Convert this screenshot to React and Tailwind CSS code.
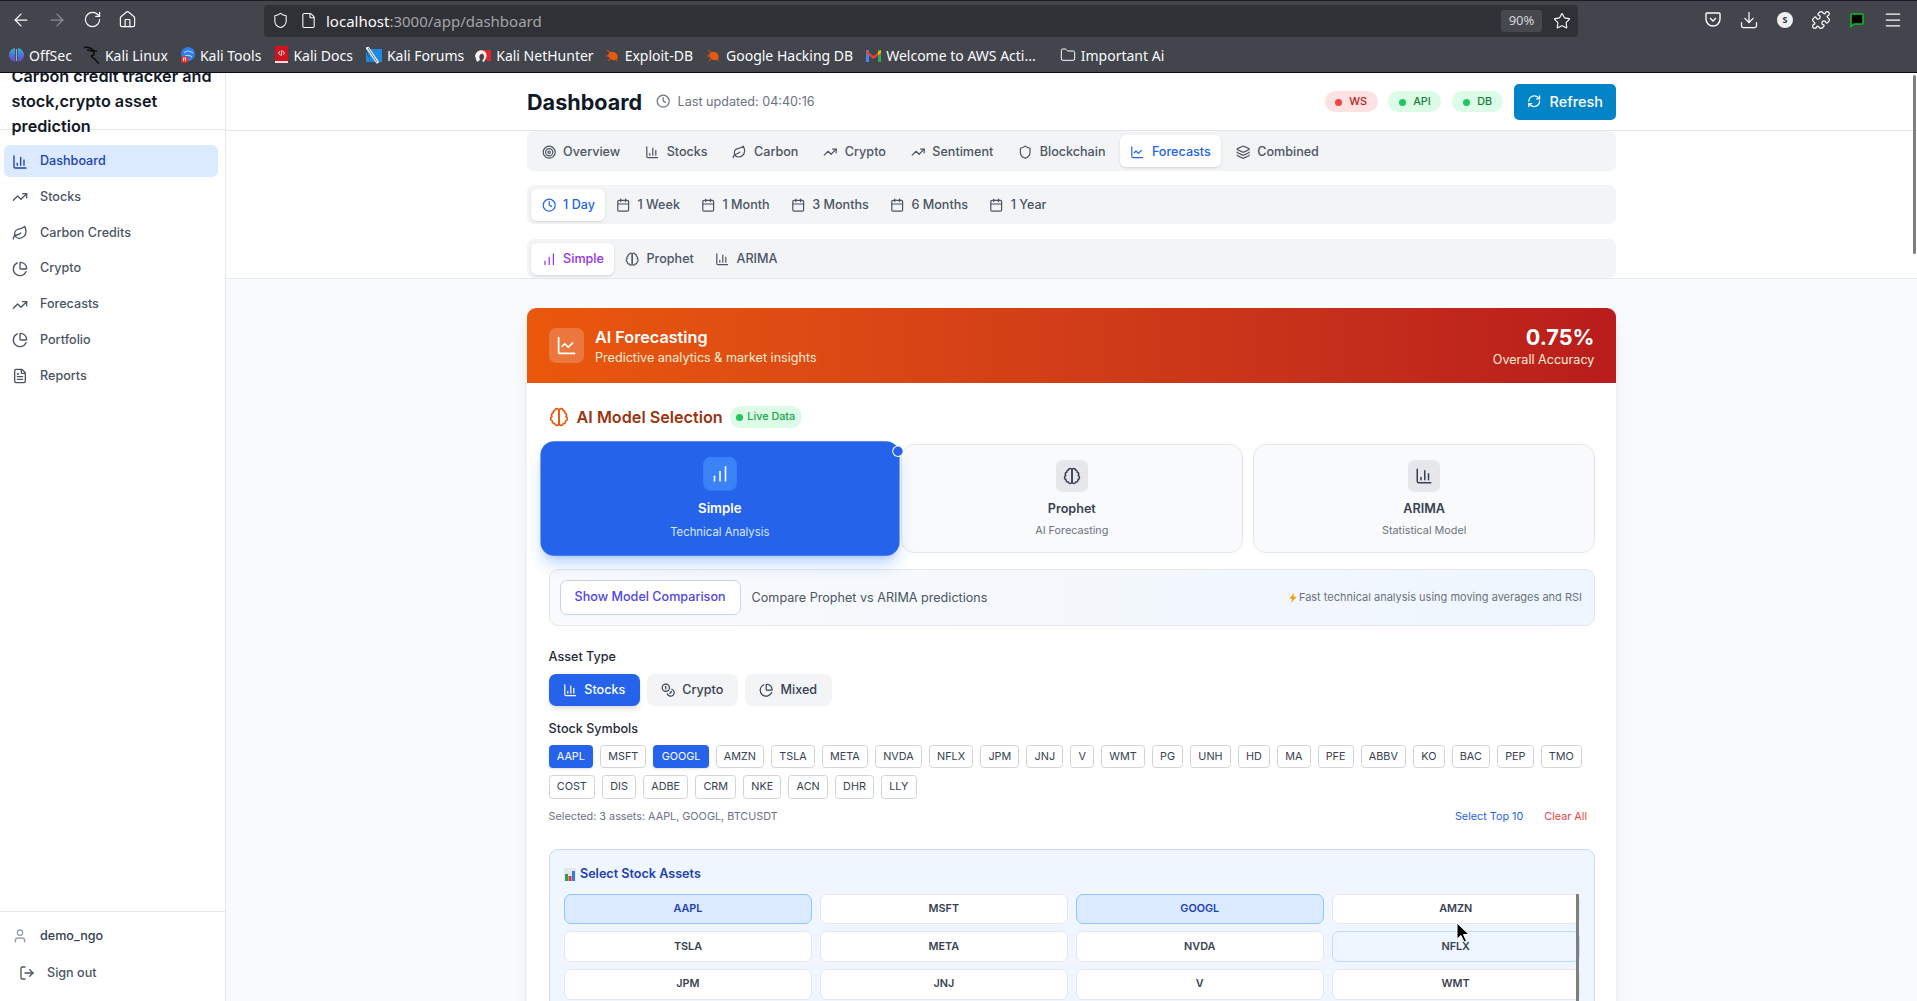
import {
  ArrowLeft, ArrowRight, RotateCw, Home, Shield, File, Star, Download, Menu, Folder, Puzzle,
  ChartColumn, ChartLine, TrendingUp, Leaf, PieChart, FileText, User, LogOut, Target, Layers,
  Clock, Calendar, RefreshCw, ChartNoAxesColumnIncreasing, Coins,
} from 'lucide-react';

// the two-lobed brain, lucide's current one has different strokes
function BrainIcon({ size = 18, color = 'currentColor' }) {
  return (
    <svg width={size} height={size} viewBox="0 0 24 24" fill="none" stroke={color} strokeWidth="2" strokeLinecap="round" strokeLinejoin="round">
      <path d="M9.500 2A2.500 2.500 0 0 1 12 4.500v15a2.500 2.500 0 0 1-4.960.44 2.500 2.500 0 0 1-2.960-3.080 3 3 0 0 1-.340-5.580 2.500 2.500 0 0 1 1.320-4.240 2.500 2.500 0 0 1 1.980-3A2.500 2.500 0 0 1 9.500 2Z" />
      <path d="M14.500 2A2.500 2.500 0 0 0 12 4.500v15a2.500 2.500 0 0 0 4.960.44 2.500 2.500 0 0 0 2.960-3.080 3 3 0 0 0 .340-5.580 2.500 2.500 0 0 0-1.320-4.240 2.500 2.500 0 0 0-1.980-3A2.500 2.500 0 0 0 14.500 2Z" />
    </svg>
  );
}

const NAV = [
  { label: 'Dashboard', icon: ChartColumn, active: true },
  { label: 'Stocks', icon: TrendingUp },
  { label: 'Carbon Credits', icon: Leaf },
  { label: 'Crypto', icon: PieChart },
  { label: 'Forecasts', icon: TrendingUp },
  { label: 'Portfolio', icon: PieChart },
  { label: 'Reports', icon: FileText },
];

const TABS = [
  { label: 'Overview', icon: Target },
  { label: 'Stocks', icon: ChartColumn },
  { label: 'Carbon', icon: Leaf },
  { label: 'Crypto', icon: TrendingUp },
  { label: 'Sentiment', icon: TrendingUp },
  { label: 'Blockchain', icon: Shield },
  { label: 'Forecasts', icon: ChartLine, active: true },
  { label: 'Combined', icon: Layers },
];

const RANGES = ['1 Week', '1 Month', '3 Months', '6 Months', '1 Year'];

const SYMBOLS = [
  'AAPL', 'MSFT', 'GOOGL', 'AMZN', 'TSLA', 'META', 'NVDA', 'NFLX', 'JPM', 'JNJ', 'V', 'WMT', 'PG', 'UNH', 'HD',
  'MA', 'PFE', 'ABBV', 'KO', 'BAC', 'PEP', 'TMO', 'COST', 'DIS', 'ADBE', 'CRM', 'NKE', 'ACN', 'DHR', 'LLY',
];
const SELECTED = ['AAPL', 'GOOGL'];

// tiny bookmark favicons
const Fav = {
  offsec: (
    <svg width="15" height="16" viewBox="0 0 15 16">
      <defs>
        <linearGradient id="off" x1="0" y1="0" x2="0" y2="1">
          <stop offset="0" stopColor="#35b0d8" />
          <stop offset="1" stopColor="#6a3fd0" />
        </linearGradient>
      </defs>
      <path d="M6 1C2 2 0 5 0 8s2 6 6 7z" fill="url(#off)" />
      <path d="M9 1c4 1 6 4 6 7s-2 6-6 7z" fill="url(#off)" />
      <rect x="6.900" y="2" width="1.200" height="12" fill="#7fb6e8" />
    </svg>
  ),
  kali: (
    <svg width="16" height="18" viewBox="0 0 16 18" fill="none" stroke="#0b0b0b" strokeWidth="1.4">
      <path d="M0 1.500c3-.5 6 0 8 1.500s3 3 5 2M3 4c3 0 6 1 7 3s-1 3-3 2.500M7 9.500c1 3 4 3 5 5s1 2 3 3" />
    </svg>
  ),
  tools: (
    <svg width="15" height="18" viewBox="0 0 15 18">
      <circle cx="8" cy="8" r="7" fill="#2f80ed" />
      <path d="M4 7c3-3 6-2 9 0M5 10c2-1 5-1 7 1" stroke="#cfe4ff" strokeWidth="1" fill="none" />
      <rect x="1" y="10" width="7" height="7" rx="3" fill="#e5322d" />
      <path d="M3 12h3M3.500 12v3M5.500 12v3" stroke="#fff" strokeWidth=".8" />
    </svg>
  ),
  docs: (
    <svg width="13" height="18" viewBox="0 0 13 18">
      <rect width="13" height="15" fill="#d3121d" />
      <rect y="15" width="13" height="2" fill="#f0d9d9" />
      <path d="M5 5 3.500 7 5 9M8 5l1.500 2L8 9M7 4 6 10" stroke="#fff" strokeWidth=".9" fill="none" />
    </svg>
  ),
  forums: (
    <svg width="16" height="17" viewBox="0 0 16 17">
      <path d="M0 2h16v13H5z" fill="#1e88e5" />
      <path d="M0 5v10h5z" fill="#1e88e5" />
      <path d="M1 0l11 16" stroke="#fff" strokeWidth="3" />
      <path d="M2 1l9 14" stroke="#3a3d44" strokeWidth=".8" />
    </svg>
  ),
  hunter: (
    <svg width="17" height="17" viewBox="0 0 17 17">
      <path d="M5 3h12v11h-4z" fill="#e0262d" />
      <path d="M1 9c1-5 6-7 9-5 3 2 3 5 2 7l-2 4-2-1 2-3c1-3-1-5-3-4S5 10 6 13L3 15z" fill="#f4f4f4" />
    </svg>
  ),
  bug: (
    <svg width="15" height="15" viewBox="0 0 15 15">
      <ellipse cx="8" cy="8" rx="5" ry="4" fill="#e8590c" transform="rotate(30 8 8)" />
      <path d="M2 2l4 3M1 8h3M3 13l3-3M13 13l-3-2" stroke="#e8590c" strokeWidth="1" />
    </svg>
  ),
  gmail: (
    <svg width="15" height="13" viewBox="0 0 15 13">
      <rect x="0" y="1" width="3" height="12" fill="#4285f4" />
      <rect x="12" y="1" width="3" height="12" fill="#34a853" />
      <path d="M0 1l7.500 6 7.500-6v3L7.500 10 0 4z" fill="#ea4335" />
      <path d="M12 3l3-2v3l-3 2z" fill="#fbbc04" />
    </svg>
  ),
};

const BOOKMARKS = [
  { label: 'OffSec', fav: Fav.offsec, gap: 'ml-[9px]' },
  { label: 'Kali Linux', fav: Fav.kali, gap: 'ml-[12px]' },
  { label: 'Kali Tools', fav: Fav.tools, gap: 'ml-[12px]' },
  { label: 'Kali Docs', fav: Fav.docs, gap: 'ml-[14px]' },
  { label: 'Kali Forums', fav: Fav.forums, gap: 'ml-[13px]' },
  { label: 'Kali NetHunter', fav: Fav.hunter, gap: 'ml-[10px]' },
  { label: 'Exploit-DB', fav: Fav.bug, gap: 'ml-[11px]' },
  { label: 'Google Hacking DB', fav: Fav.bug, gap: 'ml-[13px]' },
  { label: 'Welcome to AWS Acti...', fav: Fav.gmail, gap: 'ml-[13px]' },
  { label: 'Important Ai', fav: <Folder size={16} strokeWidth={1.5} color="#fbfbfe" />, gap: 'ml-[24px]' },
];

function BrowserChrome() {
  return (
    <div className="h-[73px] shrink-0 bg-[#42454c] border-t border-b border-t-[#1c1d20] border-b-[#0c0c0d] flex flex-col text-[#fbfbfe] font-['Noto_Sans',sans-serif]">
      <div className="h-[36px] flex items-center">
        <div className="flex items-center gap-[16px] pl-[11px] w-[264px] mt-[1px]">
          <ArrowLeft size={20} strokeWidth={1.5} />
          <ArrowRight size={20} strokeWidth={1.5} className="opacity-40" />
          <RotateCw size={19} strokeWidth={1.5} />
          <Home size={19} strokeWidth={1.5} />
        </div>
        <div className="w-[1314px] h-[32px] mt-[3px] rounded-[4px] bg-[#303136] flex items-center pl-[8px] pr-[7px]">
          <Shield size={17} strokeWidth={1.5} />
          <File size={17} strokeWidth={1.5} className="ml-[11px]" />
          <span className="ml-[9px] text-[15px] pt-[1px]">
            localhost<span className="text-[#a3a4a8]">:3000/app/dashboard</span>
          </span>
          <span className="ml-auto w-[41px] h-[22px] rounded-[3px] bg-[#47484d] flex items-center justify-center text-[13px] text-[#d4d4d6]">
            90%
          </span>
          <Star size={18} strokeWidth={1.5} className="ml-[11px]" />
        </div>
        <div className="flex-1 flex items-center gap-[16px] pl-[125px] mt-[1px]">
          <svg width="20" height="20" viewBox="0 0 20 20" fill="none" stroke="#fbfbfe" strokeWidth="1.4">
            <path d="M4 3h12a1 1 0 0 1 1 1v5a7 7 0 0 1-14 0V4a1 1 0 0 1 1-1z" />
            <path d="M7 8l3 3 3-3" />
          </svg>
          <Download size={20} strokeWidth={1.5} />
          <span className="w-[20px] h-[20px] flex items-center justify-center">
            <span className="w-[16px] h-[16px] rounded-full bg-[#f0f0f0] text-[#2b2a33] text-[9px] font-bold flex items-center justify-center">
              S
            </span>
          </span>
          <Puzzle size={20} strokeWidth={1.5} />
          <svg width="20" height="20" viewBox="0 0 20 20">
            <path d="M5 4h10a1 1 0 0 1 1 1v8a1 1 0 0 1-1 1H7l-3 2.500V5a1 1 0 0 1 1-1z" fill="#000" stroke="#10c020" strokeWidth="1.500" />
          </svg>
          <Menu size={20} strokeWidth={1.5} />
        </div>
      </div>
      <div className="h-[34px] pt-[2px] flex items-center text-[14px] whitespace-nowrap">
        {BOOKMARKS.map((b) => (
          <div key={b.label} className={`flex items-center gap-[5px] ${b.gap}`}>
            {b.fav}
            <span>{b.label}</span>
          </div>
        ))}
      </div>
    </div>
  );
}

function Sidebar() {
  return (
    <aside className="w-[226px] shrink-0 bg-white border-r border-[#e5e7eb] flex flex-col overflow-hidden">
      <div className="h-[57px] shrink-0 border-b border-[#e5e7eb] flex items-center pl-[11.500px] pr-[12px] pt-[1px]">
        <h2 className="text-[16.2px] leading-[25.2px] font-semibold text-[#111827]">
          Carbon credit tracker and stock,crypto asset prediction
        </h2>
      </div>
      <nav className="flex flex-col gap-[3.8px] pt-[15px] pl-[4px] pr-[7px]">
        {NAV.map((item) => (
          <a
            key={item.label}
            className={`h-[32px] pt-[1px] flex items-center gap-[12px] pl-[8px] rounded-[6px] text-[12.6px] font-medium ${
              item.active ? 'bg-[#dbeafe] text-[#1e40af]' : 'text-[#4b5563]'
            }`}
          >
            <item.icon size={16} strokeWidth={2} />
            {item.label}
          </a>
        ))}
      </nav>
      <div className="mt-auto h-[90px] border-t border-[#e5e7eb] text-[12.6px] font-medium">
        <div className="h-[47px] flex items-center gap-[12px] pl-[12px] pt-[1px] text-[#374151]">
          <User size={16} color="#9ca3af" />
          demo_ngo
        </div>
        <div className="mt-[5px] flex items-center gap-[12px] pl-[19px] text-[#4b5563]">
          <LogOut size={16} />
          Sign out
        </div>
      </div>
    </aside>
  );
}

function TabBar({ className, children }) {
  return <div className={`bg-[#f3f4f6] rounded-[7px] flex items-center pl-[4px] ${className}`}>{children}</div>;
}

function TabButton({ icon: Icon, label, active, color }) {
  return (
    <button className={`h-[32px] pt-[2px] px-[10.500px] rounded-[6px] flex items-center gap-[7.2px] text-[12.6px] font-medium ${
      active ? `bg-white shadow-sm ${color}` : 'text-[#4b5563]'
    }`}>
      <Icon size={14.4} />
      {label}
    </button>
  );
}

function TopBar() {
  return (
    <header className="bg-white border-b border-[#e5e7eb] shrink-0">
      <div className="h-[58px] border-b border-[#e5e7eb]">
        <div className="w-[1089px] mx-auto h-full flex items-center">
          <h1 className="mt-[2px] text-[21.6px] font-bold text-[#111827]">Dashboard</h1>
          <Clock size={14.4} color="#6b7280" className="ml-[14px]" />
          <span className="ml-[7px] mt-[1px] text-[12.6px] text-[#6b7280]">Last updated: 04:40:16</span>
          <div className="ml-auto flex items-center gap-[10.8px] text-[10.8px] font-medium">
            <span className="h-[21px] w-[53px] pt-[1px] rounded-full bg-[#fee2e2] text-[#b91c1c] flex items-center justify-center gap-[7px]">
              <i className="w-[7px] h-[7px] rounded-full bg-[#ef4444]" />WS
            </span>
            <span className="h-[21px] w-[53px] pt-[1px] rounded-full bg-[#dcfce7] text-[#15803d] flex items-center justify-center gap-[7px]">
              <i className="w-[7px] h-[7px] rounded-full bg-[#22c55e]" />API
            </span>
            <span className="h-[21px] w-[51px] pt-[1px] rounded-full bg-[#dcfce7] text-[#15803d] flex items-center justify-center gap-[7px]">
              <i className="w-[7px] h-[7px] rounded-full bg-[#22c55e]" />DB
            </span>
            <button className="h-[36px] w-[102px] rounded-[5px] bg-[#0284c7] text-white text-[14.4px] font-medium flex items-center justify-center gap-[8px]">
              <RefreshCw size={14.4} />
              Refresh
            </button>
          </div>
        </div>
      </div>
      <div className="w-[1089px] mx-auto flex flex-col">
        <TabBar className="h-[40px] gap-[3.800px]">
          {TABS.map((t) => (
            <TabButton key={t.label} {...t} color="text-[#2563eb]" />
          ))}
        </TabBar>
        <TabBar className="h-[39px] mt-[14px]">
          <TabButton icon={Clock} label="1 Day" active color="text-[#2563eb]" />
          {RANGES.map((r) => (
            <TabButton key={r} icon={Calendar} label={r} />
          ))}
        </TabBar>
        <TabBar className="h-[39px] mt-[15px]">
          <TabButton icon={ChartNoAxesColumnIncreasing} label="Simple" active color="text-[#9333ea]" />
          <TabButton icon={BrainIcon} label="Prophet" />
          <TabButton icon={ChartColumn} label="ARIMA" />
        </TabBar>
      </div>
    </header>
  );
}

function ModelCard({ icon: Icon, title, sub }) {
  return (
    <div className="h-[109px] rounded-[13px] border border-[#e5e7eb] bg-[#f9fafb] flex flex-col items-center pt-[15px]">
      <div className="w-[32.400px] h-[32.400px] rounded-[7px] bg-[#e5e7eb] flex items-center justify-center text-[#374151]">
        <Icon size={18} />
      </div>
      <div className="mt-[8px] text-[12.6px] leading-[18px] font-semibold text-[#374151]">{title}</div>
      <div className="mt-[4px] text-[10.8px] leading-[18px] text-[#6b7280]">{sub}</div>
    </div>
  );
}

function Forecasting() {
  return (
    <section className="w-[1089px] mx-auto mt-[29px] bg-white rounded-t-[9px] shadow-lg">
      <div className="h-[75px] rounded-t-[9px] bg-gradient-to-r from-[#ea580c] to-[#b91c1c] flex items-center pl-[22px] pr-[21.6px] text-white">
        <div className="w-[35px] h-[35px] rounded-[7px] bg-white/20 flex items-center justify-center">
          <ChartLine size={21} />
        </div>
        <div className="ml-[11px]">
          <div className="text-[16.2px] leading-[24px] font-semibold">AI Forecasting</div>
          <div className="text-[12.6px] leading-[18px] text-[#ffedd5]">Predictive analytics &amp; market insights</div>
        </div>
        <div className="ml-auto text-right">
          <div className="text-[21.6px] leading-[28px] font-bold">0.75%</div>
          <div className="text-[12.6px] leading-[18px] text-[#ffedd5]">Overall Accuracy</div>
        </div>
      </div>

      <div className="pl-[21.6px] pr-[21px] pt-[23px]">
        <div className="h-[22px] flex items-center">
          <BrainIcon size={20} color="#ea580c" />
          <h3 className="ml-[8px] text-[16.2px] font-semibold text-[#9a3412]">AI Model Selection</h3>
          <span className="ml-[7px] h-[22px] w-[72px] rounded-full bg-[#dcfce7] text-[#16a34a] text-[10.8px] font-medium flex items-center justify-center gap-[4px]">
            <i className="w-[7px] h-[7px] rounded-full bg-[#22c55e]" />
            Live Data
          </span>
        </div>

        <div className="grid grid-cols-3 gap-[10.8px] mt-[16px]">
          <div className="relative h-[109px] scale-105 rounded-[13px] bg-[#2563eb] shadow-lg shadow-blue-500/30 flex flex-col items-center pt-[15px] text-white">
            <div className="w-[32.400px] h-[32.400px] rounded-[7px] bg-[#3b82f6] flex items-center justify-center">
              <ChartNoAxesColumnIncreasing size={18} />
            </div>
            <div className="mt-[8px] text-[12.6px] leading-[18px] font-semibold">Simple</div>
            <div className="mt-[5px] text-[10.8px] leading-[18px] text-[#dbeafe]">Technical Analysis</div>
            <span className="absolute -right-[3px] top-[5px] w-[9px] h-[9px] rounded-full bg-[#2563eb] ring-1 ring-white" />
          </div>
          <ModelCard icon={BrainIcon} title="Prophet" sub="AI Forecasting" />
          <ModelCard icon={ChartColumn} title="ARIMA" sub="Statistical Model" />
        </div>

        <div className="mt-[16px] h-[57px] rounded-[9px] border border-[#e5e7eb] bg-gradient-to-r from-[#f9fafb] to-[#eff6ff] flex items-center pl-[10px] pr-[12px]">
          <button className="h-[35px] w-[181px] rounded-[7px] bg-white border border-[#c7d2fe] text-[#4f46e5] text-[12.6px] font-medium">
            Show Model Comparison
          </button>
          <span className="ml-[11px] pt-[1px] text-[12.6px] text-[#4b5563]">Compare Prophet vs ARIMA predictions</span>
          <span className="ml-auto flex items-center gap-[1px] text-[11px] text-[#6b7280]">
            <svg width="10" height="12" viewBox="0 0 12 12"><path d="M7.500 0 1.500 7h3.500L3.500 12 10.500 4.500H6.500z" fill="#f59e0b" /></svg>
            Fast technical analysis using moving averages and RSI
          </span>
        </div>

        <div className="mt-[22px] text-[12.6px] leading-[18px] font-medium text-[#1f2937]">Asset Type</div>
        <div className="mt-[8px] flex gap-[7px] text-[12.6px] font-medium">
          <button className="h-[32px] w-[91px] rounded-[7px] bg-[#2563eb] text-white shadow-md flex items-center justify-center gap-[7px]">
            <ChartColumn size={14.4} />Stocks
          </button>
          <button className="h-[32px] w-[91px] rounded-[7px] bg-[#f3f4f6] text-[#374151] flex items-center justify-center gap-[7px]">
            <Coins size={14.4} />Crypto
          </button>
          <button className="h-[32px] w-[87px] rounded-[7px] bg-[#f3f4f6] text-[#374151] flex items-center justify-center gap-[7px]">
            <PieChart size={14.4} />Mixed
          </button>
        </div>

        <div className="mt-[14px] text-[12.6px] leading-[18px] font-medium text-[#1f2937]">Stock Symbols</div>
        <div className="mt-[7px] flex flex-wrap gap-x-[7px] gap-y-[7px]">
          {SYMBOLS.map((s) => (
            <button
              key={s}
              className={`h-[23.400px] px-[7.2px] rounded-[3.500px] border text-[10.8px] ${
                SELECTED.includes(s)
                  ? 'bg-[#2563eb] border-[#2563eb] text-white shadow-sm'
                  : 'bg-white border-[#d1d5db] text-[#374151]'
              }`}
            >
              {s}
            </button>
          ))}
        </div>

        <div className="mt-[9px] h-[18px] flex items-center text-[10.8px] text-[#6b7280]">
          Selected: 3 assets: AAPL, GOOGL, BTCUSDT
          <span className="ml-auto text-[#2563eb]">Select Top 10</span>
          <span className="ml-[21px] mr-[8px] text-[#ef4444]">Clear All</span>
        </div>

        <div className="relative mt-[23px] rounded-[9px] border border-[#bfdbfe] bg-[#eff6ff] px-[14.4px] pt-[16px] pb-[16px]">
          <div className="h-[18px] flex items-center gap-[4px] text-[12.6px] font-semibold text-[#1e40af]">
            <svg width="12" height="13" viewBox="0 0 12 13">
              <rect width="12" height="13" fill="#e5e7eb" />
              <rect x="1" y="6" width="3" height="7" fill="#2e9e4f" />
              <rect x="4.500" y="8" width="3" height="5" fill="#d93a3a" />
              <rect x="8" y="3" width="3" height="10" fill="#3a7bd5" />
            </svg>
            Select Stock Assets
          </div>
          <div className="mt-[10px] grid grid-cols-4 gap-x-[8px] gap-y-[7px]">
            {SYMBOLS.slice(0, 12).map((s) => (
              <button
                key={s}
                className={`h-[30.600px] rounded-[7px] border text-[10.8px] font-semibold ${
                  SELECTED.includes(s)
                    ? 'bg-[#dbeafe] border-[#93c5fd] text-[#1e40af]'
                    : s === 'NFLX'
                      ? 'bg-[#eff6ff] border-[#bfdbfe] text-[#374151]'
                      : 'bg-white border-[#e5e7eb] text-[#374151]'
                }`}
              >
                {s}
              </button>
            ))}
          </div>
          <div className="absolute right-[15px] top-[44px] w-[3px] h-[200px] bg-[#7f7f7f]" />
        </div>
      </div>
    </section>
  );
}

export default function App() {
  return (
    <div className="relative h-screen overflow-hidden flex flex-col font-[Inter,sans-serif]">
      <BrowserChrome />
      <div className="flex flex-1 min-h-0">
        <Sidebar />
        <main className="flex-1 min-w-0 bg-[#f9fafb] overflow-hidden">
          <TopBar />
          <Forecasting />
        </main>
      </div>
      {/* page scrollbar */}
      <div className="absolute right-[1px] top-[75px] w-[3px] h-[179px] rounded-full bg-[#7f7f7f]" />
      {/* mouse pointer */}
      <svg className="absolute left-[1456px] top-[922px]" width="14" height="21" viewBox="0 0 14 21">
        <path d="M1 1v16l4-3.500 3 6.500 2.500-1-3-6.500h5.500z" fill="#000" stroke="#fff" strokeWidth="1" />
      </svg>
    </div>
  );
}
